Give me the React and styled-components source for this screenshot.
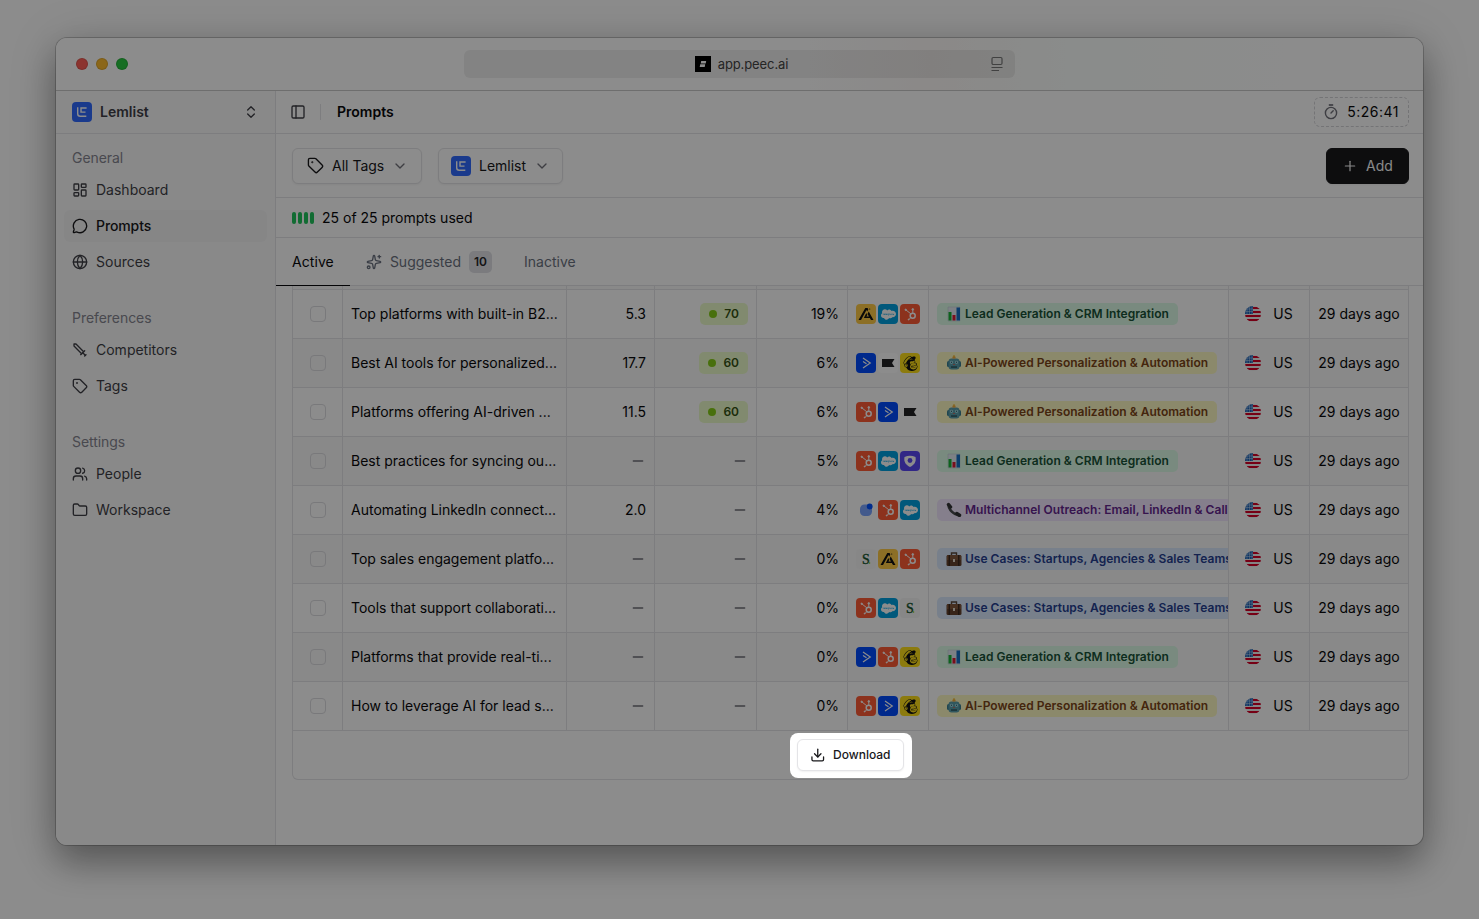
import React from 'react';
import styled, { createGlobalStyle, css } from 'styled-components';
import { LayoutDashboard, MessageCircle, Globe, Sword, Tag, Users, Folder, ChevronsUpDown, ChevronDown, PanelLeft, Plus, Sparkles, Download, Minus } from 'lucide-react';
import { FaSalesforce, FaMailchimp } from 'react-icons/fa';

const Global = createGlobalStyle`
  *, *::before, *::after { box-sizing: border-box; }
  html, body, #root { height: 100%; }
  body { margin: 0; overflow: hidden; background: #fff; font-family: Inter, sans-serif; font-size: 14px; line-height: 20px; color: #09090b; }
`;

const Page = styled.div`
  height: 919px;
  padding: 38px 56px 74px;
  background: #fff;
`;
const Window = styled.div`
  height: 807px;
  display: flex;
  flex-direction: column;
  border-radius: 11px;
  background: #fff;
  box-shadow: 0 0 0 1px rgba(0, 0, 0, .2), 0 18px 34px rgba(0, 0, 0, .3), 0 4px 50px rgba(0, 0, 0, .16);
`;
const TitleBar = styled.header`
  flex: none;
  height: 53px;
  padding: 0 20px;
  display: grid;
  grid-template-columns: 388px 551px 1fr;
  align-items: center;
  border-bottom: 1px solid #c8c8c8;
  border-radius: 11px 11px 0 0;
  background: linear-gradient(90deg, #fff 55%, #fdf9f7 64%, #fbfffd 74%, #fff 90%);
`;
const Lights = styled.div`
  display: flex;
  gap: 8px;
`;
const Light = styled.span`
  width: 12px;
  height: 12px;
  border-radius: 50%;
  background: ${p => p.$fill};
  border: 1px solid rgba(0, 0, 0, .12);
`;
const Address = styled.div`
  height: 28px;
  padding: 0 12px 0 28px;
  display: flex;
  align-items: center;
  border-radius: 6px;
  background: rgba(0, 0, 0, .065);
  color: #444;
  font-size: 13px;
`;
const Site = styled.div`
  flex: 1;
  display: flex;
  justify-content: center;
  align-items: center;
  gap: 7px;
  letter-spacing: -.1px;
`;

const Body = styled.div`
  flex: 1;
  display: flex;
  min-height: 0;
`;
const Sidebar = styled.aside`
  flex: none;
  width: 220px;
  border-right: 1px solid #e4e4e7;
  border-radius: 0 0 0 11px;
  background: #fafafa;
`;
const Workspace = styled.div`
  height: 43px;
  padding: 0 16px;
  display: flex;
  align-items: center;
  gap: 8px;
  border-bottom: 1px solid #e4e4e7;
  font-weight: 600;
  color: #3f3f46;
  svg:last-child { margin-left: auto; }
`;
const Nav = styled.nav`
  padding: 8px;
  display: flex;
  flex-direction: column;
  gap: 24px;
`;
const Group = styled.div`
  display: flex;
  flex-direction: column;
`;
const GroupLabel = styled.div`
  height: 32px;
  padding: 6px 8px;
  color: #858590;
  letter-spacing: -.05px;
`;
const NavItem = styled.a`
  height: 32px;
  padding: 0 8px;
  display: flex;
  align-items: center;
  gap: 8px;
  border-radius: 6px;
  color: ${p => (p.$active ? '#18181b' : '#3f3f46')};
  font-weight: ${p => (p.$active ? 500 : 400)};
  letter-spacing: ${p => (p.$active ? '-.1px' : '0')};
  background: ${p => (p.$active ? '#f4f4f5' : 'transparent')};
  & + & { margin-top: 4px; }
`;
const Main = styled.main`
  flex: 1;
  min-width: 0;
  display: flex;
  flex-direction: column;
`;
const Bar = styled.div`
  flex: none;
  height: ${p => p.$h}px;
  padding: 0 14px;
  padding-left: ${p => p.$left || 16}px;
  display: flex;
  align-items: center;
  border-bottom: 1px solid #e4e4e7;
`;
const Divider = styled.span`
  width: 1px;
  height: 16px;
  margin: 0 16px 0 14px;
  background: #e4e4e7;
`;
const Title = styled.h1`
  margin: 0;
  font-size: 14px;
  font-weight: 600;
`;
const Timer = styled.div`
  margin-left: auto;
  width: 95px;
  height: 30px;
  padding: 0 9px;
  display: flex;
  align-items: center;
  justify-content: space-between;
  border: 1px dashed #d4d4d8;
  border-radius: 6px;
  letter-spacing: .5px;
  white-space: nowrap;
`;
const Button = styled.button`
  width: ${p => p.$w}px;
  height: 36px;
  margin-right: 16px;
  padding: 0 0 0 ${p => p.$pad}px;
  display: flex;
  align-items: center;
  gap: 8px;
  border: 1px solid #e4e4e7;
  border-radius: 6px;
  background: #fff;
  box-shadow: 0 1px 2px rgba(0, 0, 0, .05);
  color: #18181b;
  font: inherit;
  white-space: nowrap;
  ${p => p.$dark && css`
    margin: 0 0 0 auto;
    border-color: #18181b;
    background: #18181b;
    color: #fafafa;
  `}
`;
const Meter = styled.span`
  display: flex;
  gap: 2px;
  margin-right: 8px;
  i { width: 4px; height: 12px; border-radius: 2px; background: #22c55e; }
`;
const Tabs = styled.div`
  flex: none;
  height: 48px;
  display: flex;
  border-bottom: 1px solid #e4e4e7;
`;
const Tab = styled.div`
  height: 48px;
  padding: 0 16px;
  display: flex;
  align-items: center;
  gap: 8px;
  border-bottom: 1px solid ${p => (p.$on ? '#09090b' : 'transparent')};
  color: ${p => (p.$on ? '#09090b' : '#6b7280')};
  letter-spacing: ${p => (p.$on ? '.08px' : '0')};
`;
const Count = styled.span`
  height: 22px;
  padding: 0 5px;
  border-radius: 5px;
  background: #e0e1e6;
  color: #27272a;
  font-size: 12px;
  font-weight: 600;
  line-height: 22px;
`;

const Table = styled.section`
  margin: 0 14px 0 16px;
  border: 1px solid #e4e4e7;
  border-top: 0;
  border-radius: 0 0 6px 6px;
`;
const Row = styled.div`
  height: ${p => p.$h || 49}px;
  display: grid;
  grid-template-columns: 50px 224px 88px 102px 91px 81px 300px 81px 98px;
  border-bottom: 1px solid #e4e4e7;
  background: ${p => (p.$alt ? '#fafafa' : '#fff')};
`;
const Cell = styled.div`
  min-width: 0;
  padding: 0 8px;
  display: flex;
  align-items: center;
  justify-content: ${p => p.$align || 'flex-start'};
  gap: ${p => p.$gap || 0}px;
  overflow: hidden;
  white-space: nowrap;
  border-right: 1px solid #e4e4e7;
  &:last-child { border-right: 0; }
`;
const Checkbox = styled.span`
  width: 16px;
  height: 16px;
  border: 1px solid #dcdce0;
  border-radius: 4px;
`;
const Score = styled.span`
  height: 22px;
  padding: 0 9px 0 8.5px;
  display: flex;
  align-items: center;
  gap: 7.5px;
  border-radius: 5px;
  background: #ecfccb;
  color: #365314;
  font-size: 12px;
  font-weight: 600;
  &::before { content: ''; width: 8px; height: 8px; border-radius: 50%; background: #84cc16; }
`;
const tones = {
  green: ['#dcfce7', '#195238'],
  yellow: ['#fef9c3', '#7c4518'],
  purple: ['#f3e8ff', '#64268f'],
  blue: ['#dbeafe', '#263f91'],
};
const TopicTag = styled.span`
  flex: none;
  height: 22px;
  padding: 0 9px;
  display: flex;
  align-items: center;
  gap: 3px;
  border-radius: 5px;
  background: ${p => tones[p.$tone][0]};
  color: ${p => tones[p.$tone][1]};
  font-size: 12px;
  font-weight: 600;
  letter-spacing: .02px;
`;
const Brand = styled.span`
  width: 20px;
  height: 20px;
  display: grid;
  place-items: center;
  border-radius: 4px;
  overflow: hidden;
  background: ${p => p.$bg};
  color: #fff;
`;
const Footer = styled.div`
  height: 48px;
  display: flex;
  align-items: flex-start;
  justify-content: center;
`;
const Spotlight = styled.div`
  position: relative;
  z-index: 2;
  margin-top: 2px;
  padding: 6px 8px 7px 7px;
  border-radius: 8px;
  background: #fff;
  box-shadow: 0 0 0 2000px rgba(0, 0, 0, .45);
`;
const DownloadButton = styled.button`
  width: 107px;
  height: 32px;
  padding: 0 12px;
  display: flex;
  align-items: center;
  gap: 8px;
  border: 1px solid #e4e4e7;
  border-radius: 6px;
  background: #fff;
  box-shadow: 0 1px 2px rgba(0, 0, 0, .06);
  color: #18181b;
  font: 500 12px/20px Inter, sans-serif;
  white-space: nowrap;
`;

const SwordDown = styled(Sword)`
  transform: scaleX(-1);
`;

const Lemlist = () => (
  <svg width="20" height="20" viewBox="0 0 20 20">
    <rect width="20" height="20" rx="4" fill="#316bff" />
    <path d="M5.700 5.200v6.600a2.500 2.500 0 0 0 2.500 2.500h6.100M8.500 6h6.100M8.500 10.100h5M9 5.300v5.500" fill="none" stroke="#fff" strokeWidth="1.400" />
  </svg>
);
const TimerIcon = () => (
  <svg width="14" height="16" viewBox="0 0 14 16" fill="none" stroke="#71717a" strokeWidth="1.4">
    <circle cx="7" cy="9" r="5.6" /><path d="M7 9l2.2-2.2" strokeLinecap="round" /><path d="M4.8 1h4.4" strokeWidth="1.7" />
  </svg>
);
const PeecIcon = () => (
  <svg width="16" height="16" viewBox="0 0 16 16">
    <path fill="#000" d="M0 0h16v16H0z" /><path fill="#fff" d="M6.2 5h5l-.5 2.400h-5zM5.200 8.200h5L9.700 11H4.700z" />
  </svg>
);
const ReaderIcon = () => (
  <svg width="12" height="16" viewBox="0 0 12 16" fill="none" stroke="#777" strokeWidth="1.200">
    <rect x="1" y="1.500" width="10" height="7" rx="1.200" /><path d="M.5 11.500h11M.5 14.500h7.500" />
  </svg>
);
const Flag = () => (
  <svg width="16" height="16" viewBox="0 0 16 16">
    <clipPath id="flagDisc"><circle cx="8" cy="8" r="8" /></clipPath>
    <g clipPath="url(#flagDisc)">
      <path fill="#f0f0f0" d="M0 0h16v16H0z" />
      <path fill="#d80027" d="M8 1h8v2H8zM8 5h8v2H8zM0 9h16v2H0zM0 13h16v2H0z" />
      <path fill="#1c63b8" d="M0 0h8v8H0z" />
      <path stroke="#c9dcf0" strokeWidth=".5" d="M2 0v8M4.500 0v8M7 0v8M0 3h8M0 5.500h8" />
    </g>
  </svg>
);

const Logo = ({ id }) => {
  if (id === 'hub') return (
    <Brand $bg="#ff5c35"><svg width="20" height="20" viewBox="0 0 20 20" fill="none" stroke="#fff"><circle cx="12.700" cy="11.700" r="2.500" strokeWidth="1.500" /><path strokeWidth="1" d="M12.800 9V6M10.800 9.800L6 6M10.900 13.500l-2 2" /><circle cx="5.700" cy="5.800" r=".7" fill="#fff" /><circle cx="12.800" cy="5.400" r=".8" fill="#fff" /><circle cx="8.700" cy="15.500" r=".5" fill="#fff" /></svg></Brand>
  );
  if (id === 'sf') return <Brand $bg="#00a1e0"><FaSalesforce size={15} /></Brand>;
  if (id === 'mc') return <Brand $bg="#ffe01b"><FaMailchimp size={17} color="#111" /></Brand>;
  if (id === 'ac') return (
    <Brand $bg="#004cff"><svg width="20" height="20" viewBox="0 0 20 20" fill="none" stroke="#fff" strokeWidth="1.200"><path d="M7 5l7.300 5L7 15M7 8.500l3.500 2.200" /></svg></Brand>
  );
  if (id === 'apollo') return (
    <Brand $bg="#ffcb45"><svg width="20" height="20" viewBox="0 0 20 20" fill="#111"><path d="M2.500 16L9.300 4h2.300l.7 1.400-1.100 2L10.500 6 5 16zM12.700 7.500L17.500 16H15l-3.500-6zM10.300 9l1 2-.9 1.400 2.900.2.700 1.400H7.900z" /><circle cx="13.700" cy="5" r=".6" /></svg></Brand>
  );
  if (id === 'klaviyo') return (
    <Brand $bg="#fff"><svg width="20" height="20" viewBox="0 0 20 20"><path fill="#232426" d="M4 6h12.500L14 10l2.500 4H4z" /></svg></Brand>
  );
  if (id === 'shield') return (
    <Brand $bg="#5a48f5"><svg width="20" height="20" viewBox="0 0 20 20"><path fill="#fff" d="M4.500 6q5.500-2.300 11 0c1 5-1.500 8-5.500 10-4-2-6.500-5-5.500-10z" /><circle cx="10" cy="9.500" r="2.400" fill="#5a48f5" /></svg></Brand>
  );
  if (id === 'dot') return (
    <Brand $bg="transparent"><svg width="20" height="20" viewBox="0 0 20 20"><rect x="4" y="4.500" width="12" height="11.500" rx="4.500" fill="#7ba4ff" /><circle cx="13.700" cy="6.500" r="2.900" fill="#0051ff" /></svg></Brand>
  );
  return (
    <Brand $bg="#f6f6f6"><svg width="20" height="20" viewBox="0 0 20 20"><text x="6" y="14.600" fontFamily="Liberation Serif, serif" fontSize="14" fill="#14532d" stroke="#14532d" strokeWidth=".35">S</text><circle cx="13.500" cy="14" r=".8" fill="#84cc16" /></svg></Brand>
  );
};

const Emoji = ({ tone }) => (
  <svg width="16" height="16" viewBox="0 0 16 16">
    {tone === 'green' && <><path fill="#e3ebf2" stroke="#b8c5d2" strokeWidth=".5" d="M2 1h12v14H2z" /><path fill="#16b535" d="M2.500 6h3v8.500h-3z" /><path fill="#dc1d32" d="M6.500 9h3v5.500h-3z" /><path fill="#176fc4" d="M10.500 1.500H14v13h-3.500z" /></>}
    {tone === 'yellow' && <><rect x="1" y="6" width="14" height="6" rx="1.500" fill="#3a7f92" /><rect x="2.500" y="3.500" width="11" height="11" rx="3" fill="#5a9eac" /><path fill="#ef9a35" d="M6.500 3.500h3V2h-3z" /><circle cx="8" cy="1.500" r="1.200" fill="#f4bd43" /><circle cx="5.500" cy="7.300" r="1.500" fill="#b7edf2" /><circle cx="10.500" cy="7.300" r="1.500" fill="#b7edf2" /><circle cx="5.500" cy="7.300" r=".8" fill="#24596b" /><circle cx="10.500" cy="7.300" r=".8" fill="#24596b" /><path fill="#e25646" d="M7.300 9h1.400v1H7.300z" /><path fill="#2d5863" d="M5 11.300h6v1.500H5z" /></>}
    {tone === 'purple' && <><path d="M2.500 3C3 8 8 13 13 13.500" fill="none" stroke="#484b4d" strokeWidth="2.600" strokeLinecap="round" /><path d="M2.500 2.500l2 2.500M10.800 11.500l2.700 1.700" stroke="#333638" strokeWidth="3.500" strokeLinecap="round" /></>}
    {tone === 'blue' && <><path d="M5.500 4V2h5v2" fill="none" stroke="#594638" strokeWidth="1.400" /><rect x=".5" y="4" width="15" height="11" rx="1.500" fill="#65432f" /><path fill="#82583d" d="M1 4h14v5H1z" /><path fill="#3d291e" d="M2.500 4h1.500v11H2.500zM12 4h1.500v11H12z" /><path fill="#e2d9ca" d="M7 8h2v3H7z" /></>}
  </svg>
);

const LEAD = ['green', 'Lead Generation & CRM Integration'];
const AI = ['yellow', 'AI-Powered Personalization & Automation'];
const MULTI = ['purple', 'Multichannel Outreach: Email, LinkedIn & Calls'];
const CASES = ['blue', 'Use Cases: Startups, Agencies & Sales Teams'];

const rows = [
  ['Top platforms with built-in B2...', '5.3', '70', '19%', ['apollo', 'sf', 'hub'], LEAD],
  ['Best AI tools for personalized...', '17.7', '60', '6%', ['ac', 'klaviyo', 'mc'], AI],
  ['Platforms offering AI-driven ...', '11.5', '60', '6%', ['hub', 'ac', 'klaviyo'], AI],
  ['Best practices for syncing ou...', null, null, '5%', ['hub', 'sf', 'shield'], LEAD],
  ['Automating LinkedIn connect...', '2.0', null, '4%', ['dot', 'hub', 'sf'], MULTI],
  ['Top sales engagement platfo...', null, null, '0%', ['s', 'apollo', 'hub'], CASES],
  ['Tools that support collaborati...', null, null, '0%', ['hub', 'sf', 's'], CASES],
  ['Platforms that provide real-ti...', null, null, '0%', ['ac', 'hub', 'mc'], LEAD],
  ['How to leverage AI for lead s...', null, null, '0%', ['hub', 'ac', 'mc'], AI],
];
const groups = [
  ['General', [['Dashboard', LayoutDashboard], ['Prompts', MessageCircle], ['Sources', Globe]]],
  ['Preferences', [['Competitors', SwordDown], ['Tags', Tag]]],
  ['Settings', [['People', Users], ['Workspace', Folder]]],
];
const Dash = () => <Minus size={16} color="#71717a" strokeWidth={2.2} />;

export default function App() {
  return (
    <Page>
      <Global />
      <Window>
        <TitleBar>
          <Lights><Light $fill="#ff5f57" /><Light $fill="#febc2e" /><Light $fill="#28c840" /></Lights>
          <Address><Site><PeecIcon />app.peec.ai</Site><ReaderIcon /></Address>
        </TitleBar>
        <Body>
          <Sidebar>
            <Workspace><Lemlist />Lemlist<ChevronsUpDown size={16} /></Workspace>
            <Nav>
              {groups.map(([label, items]) => (
                <Group key={label}>
                  <GroupLabel>{label}</GroupLabel>
                  {items.map(([name, Icon]) => (
                    <NavItem key={name} $active={name === 'Prompts'}><Icon size={16} strokeWidth={2} />{name}</NavItem>
                  ))}
                </Group>
              ))}
            </Nav>
          </Sidebar>
          <Main>
            <Bar $h={43} $left={14}>
              <PanelLeft size={16} color="#3f3f46" /><Divider /><Title>Prompts</Title>
              <Timer><TimerIcon />5:26:41</Timer>
            </Bar>
            <Bar $h={64}>
              <Button $w={130} $pad={14}><Tag size={17} strokeWidth={1.9} />All Tags<ChevronDown size={16} color="#71717a" /></Button>
              <Button $w={125} $pad={12}><Lemlist />Lemlist<ChevronDown size={16} color="#71717a" /></Button>
              <Button $w={83} $pad={15} $dark><Plus size={16} strokeWidth={1.8} />Add</Button>
            </Bar>
            <Bar $h={40}><Meter><i /><i /><i /><i /></Meter>25 of 25 prompts used</Bar>
            <Tabs>
              <Tab $on>Active</Tab>
              <Tab><Sparkles size={16} />Suggested<Count>10</Count></Tab>
              <Tab>Inactive</Tab>
            </Tabs>
            <Table>
              <Row $h={4} $alt><Cell /><Cell /><Cell /><Cell /><Cell /><Cell /><Cell /><Cell /><Cell /></Row>
              {rows.map(([text, pos, score, share, logos, [tone, topic]], i) => (
                <Row key={text} $alt={i % 2 === 1}>
                  <Cell $align="center"><Checkbox /></Cell>
                  <Cell>{text}</Cell>
                  <Cell $align="flex-end">{pos || <Dash />}</Cell>
                  <Cell $align="flex-end">{score ? <Score>{score}</Score> : <Dash />}</Cell>
                  <Cell $align="flex-end">{share}</Cell>
                  <Cell $gap={2}>{logos.map(id => <Logo key={id} id={id} />)}</Cell>
                  <Cell><TopicTag $tone={tone}><Emoji tone={tone} />{topic}</TopicTag></Cell>
                  <Cell $align="center" $gap={12}><Flag />US</Cell>
                  <Cell $align="center">29 days ago</Cell>
                </Row>
              ))}
              <Footer><Spotlight><DownloadButton><Download size={16} />Download</DownloadButton></Spotlight></Footer>
            </Table>
          </Main>
        </Body>
      </Window>
    </Page>
  );
}
